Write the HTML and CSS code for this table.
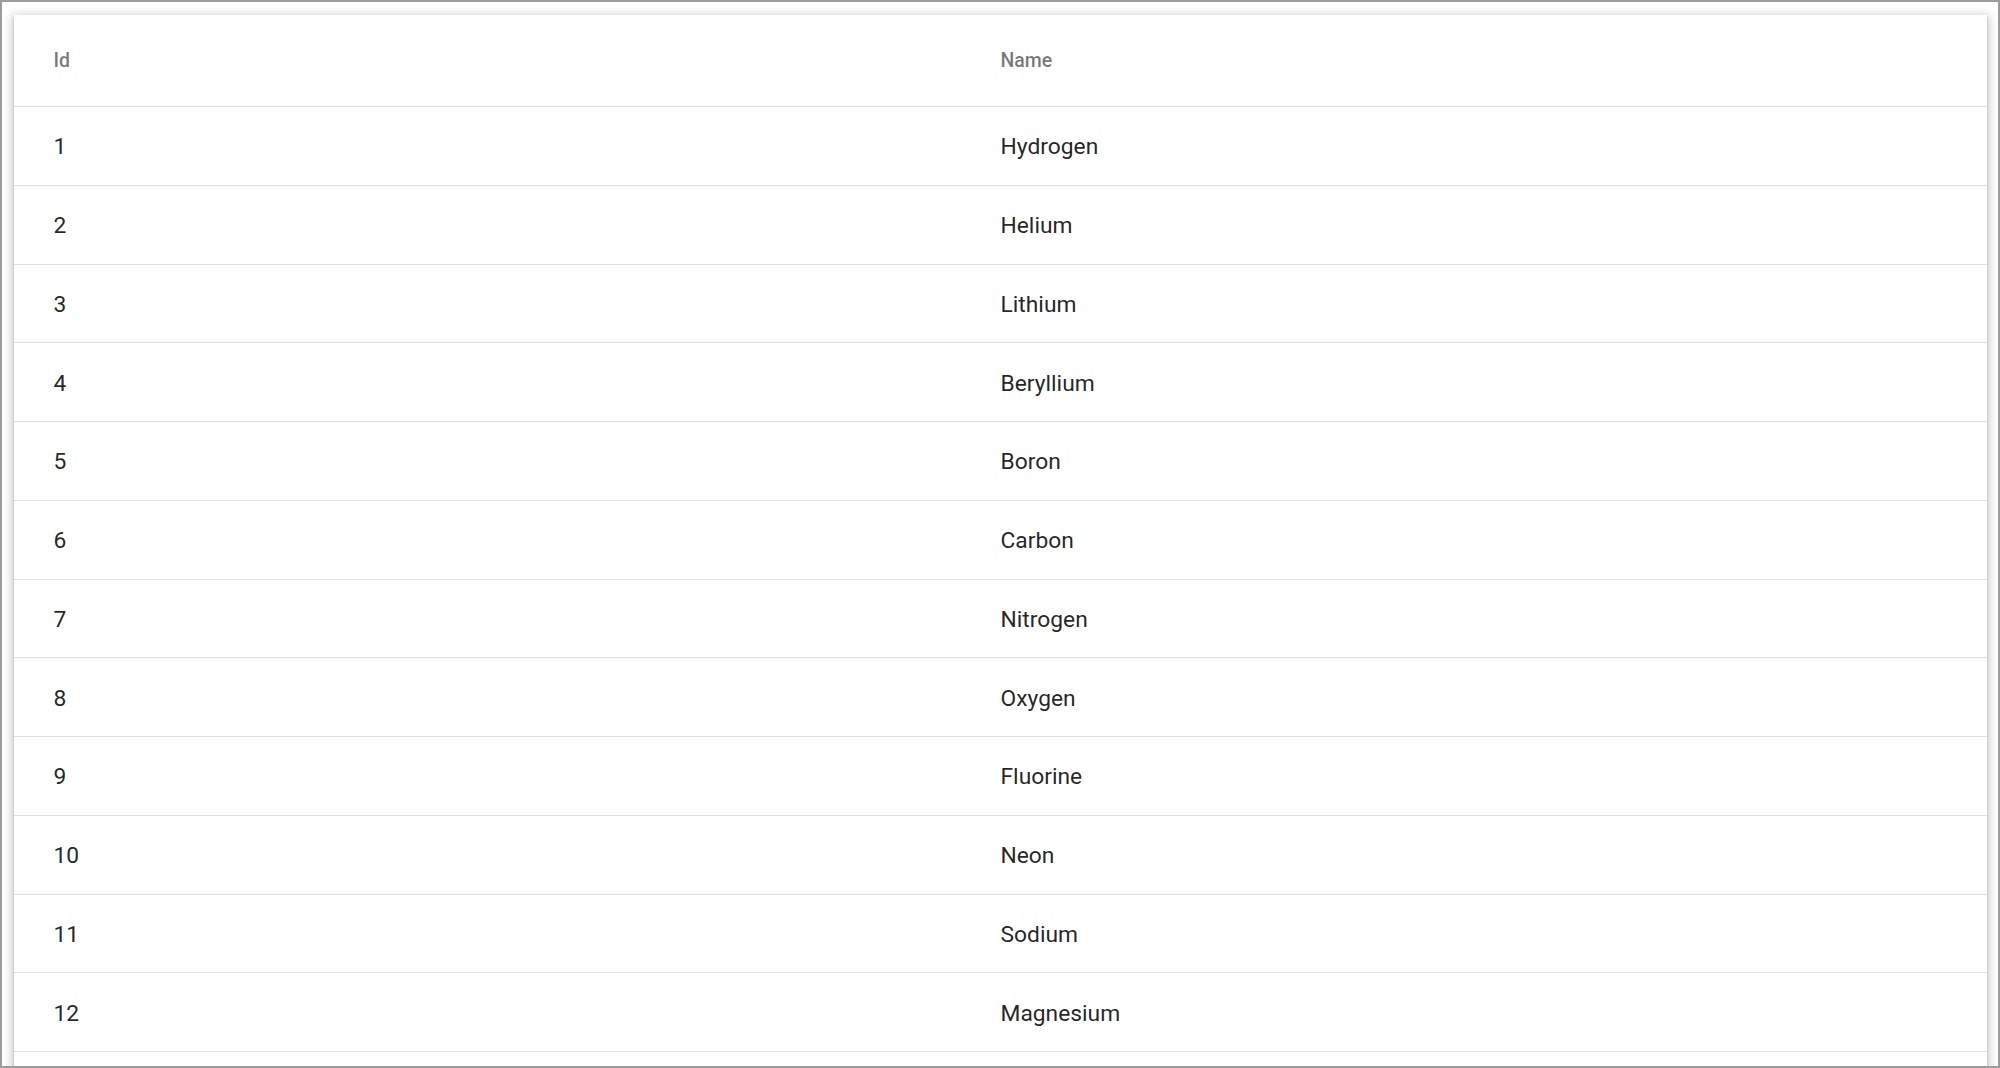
FILE: index.html
```html
<!DOCTYPE html>
<html lang="en">
<head>
<meta charset="utf-8">
<title>Elements</title>
<link rel="stylesheet" href="styles.css">
</head>
<body>
<div class="frame">
  <div class="card">
    <div class="row header-row">
      <div class="cell">Id</div>
      <div class="cell">Name</div>
    </div>
    <div class="row"><div class="cell">1</div><div class="cell">Hydrogen</div></div>
    <div class="row"><div class="cell">2</div><div class="cell">Helium</div></div>
    <div class="row"><div class="cell">3</div><div class="cell">Lithium</div></div>
    <div class="row"><div class="cell">4</div><div class="cell">Beryllium</div></div>
    <div class="row"><div class="cell">5</div><div class="cell">Boron</div></div>
    <div class="row"><div class="cell">6</div><div class="cell">Carbon</div></div>
    <div class="row"><div class="cell">7</div><div class="cell">Nitrogen</div></div>
    <div class="row"><div class="cell">8</div><div class="cell">Oxygen</div></div>
    <div class="row"><div class="cell">9</div><div class="cell">Fluorine</div></div>
    <div class="row"><div class="cell">10</div><div class="cell">Neon</div></div>
    <div class="row"><div class="cell">11</div><div class="cell">Sodium</div></div>
    <div class="row"><div class="cell">12</div><div class="cell">Magnesium</div></div>
  </div>
</div>
</body>
</html>
```
FILE: styles.css
```css
html, body {
  margin: 0;
  padding: 0;
  background: #ffffff;
}
body {
  font-family: Roboto, "Liberation Sans", sans-serif;
}
.frame {
  box-sizing: border-box;
  width: 2000px;
  height: 1068px;
  border: 2px solid #9c9c9c;
  overflow: hidden;
  padding: 13px 11px 0 12px;
  background: #ffffff;
}
.card {
  background: #ffffff;
  width: 1973px;
  padding-bottom: 60px;
  box-shadow: 0 5px 2px -3px rgba(0,0,0,0.2), 0 3px 3px 0 rgba(0,0,0,0.18), 0 2px 10px 2px rgba(0,0,0,0.2);
}
.row {
  box-sizing: border-box;
  display: flex;
  align-items: center;
  height: 78.75px;
  padding: 2px 39.4px 0;
  border-bottom: 1.6px solid #e0e0e0;
  color: rgba(0,0,0,0.87);
  font-size: 22.8px;
}
.header-row {
  height: 92px;
  padding-top: 0;
  font-size: 19.5px;
  font-weight: 500;
  color: rgba(0,0,0,0.54);
}
.cell {
  flex: 1;
}
```
